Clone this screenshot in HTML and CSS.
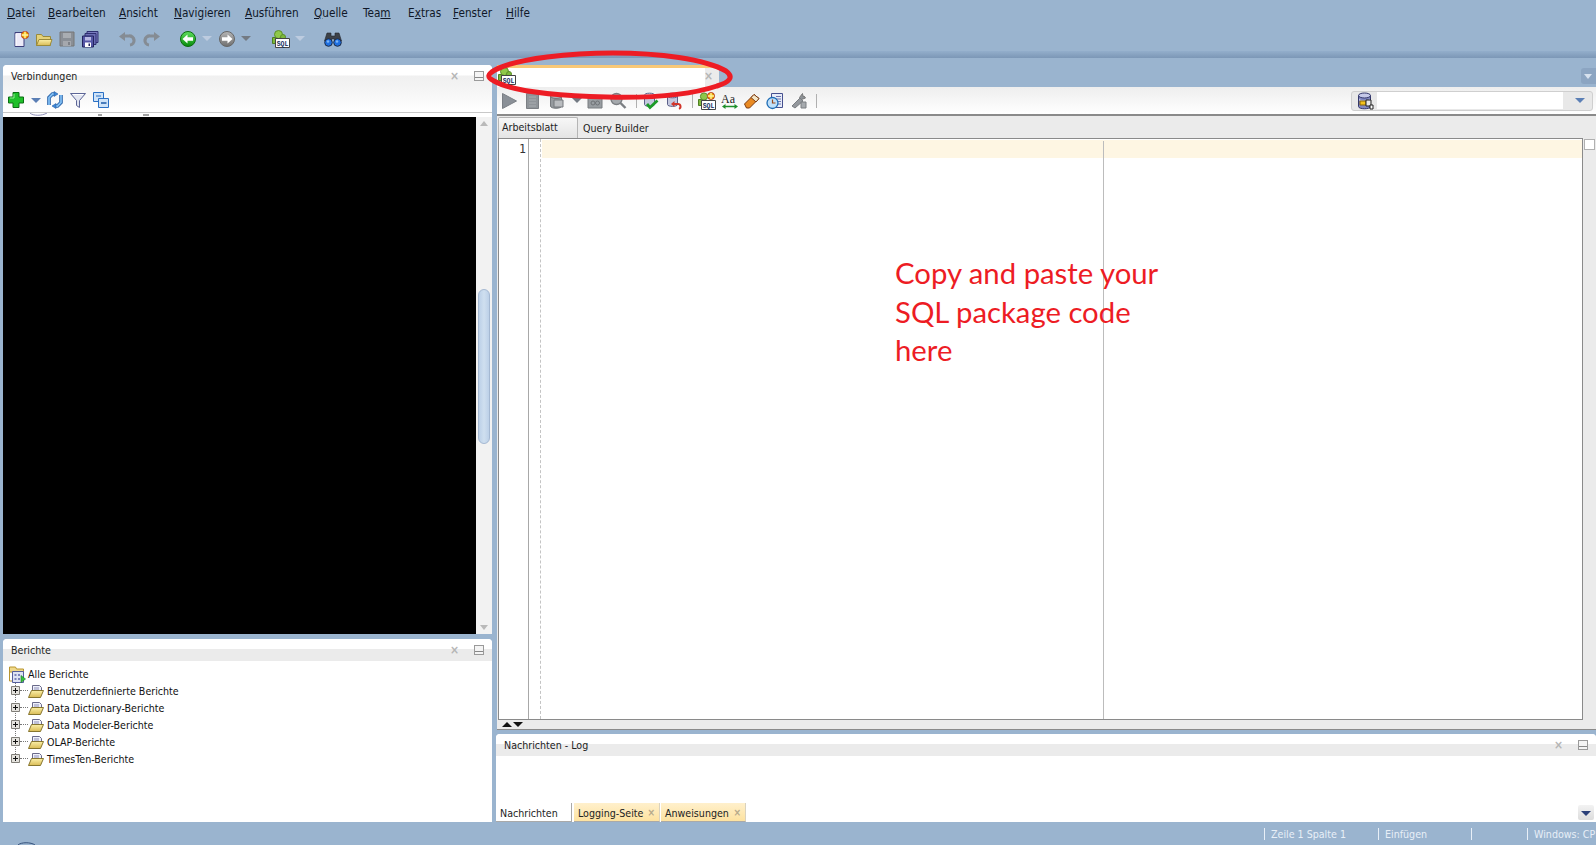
FILE: index.html
```html
<!DOCTYPE html>
<html>
  <head>
    <title>SQL Developer</title>
    <link rel="stylesheet" href="styles.css">
  </head>
  <body>
    <svg class="sprite">
      <defs>
        <linearGradient id="greenBall" x1="0" y1="0" x2="0" y2="1">
          <stop offset="0" stop-color="#5fe05f" />
          <stop offset="1" stop-color="#078a0b" />
        </linearGradient>
        <linearGradient id="greyBall" x1="0" y1="0" x2="0" y2="1">
          <stop offset="0" stop-color="#b5b5b5" />
          <stop offset="1" stop-color="#6f6f6f" />
        </linearGradient>
        <linearGradient id="folderFill" x1="0" y1="0" x2="0" y2="1">
          <stop offset="0" stop-color="#fbf0a8" />
          <stop offset="1" stop-color="#d9bb55" />
        </linearGradient>
      </defs>
      <symbol id="i-new" viewBox="0 0 18 18">
        <path d="M3 2.500h9v14H3z" fill="#eceaf8" stroke="#3d3f7c" />
        <path d="M4 4v12" stroke="#fff" />
        <circle cx="13" cy="5" r="3.600" fill="#f2b705" stroke="#b5301c" />
        <path d="M13 1.500v7M9.500 5h7" stroke="#fff3a0" stroke-width="1.400" />
      </symbol>
      <symbol id="i-open" viewBox="0 0 18 18">
        <path d="M1.500 4.500h5l1.500 2h7.500v9h-14z" fill="#e5d27a" stroke="#9a8a3a" />
        <path d="M1.500 15.500l2.500-6h13l-2 6z" fill="url(#folderFill)" stroke="#9a8a3a" />
      </symbol>
      <symbol id="i-save" viewBox="0 0 18 18">
        <path d="M2 2h14v14H2z" fill="#8a8f96" stroke="#777" />
        <path d="M5 3h8v5H5z" fill="#a9adb2" />
        <path d="M5 11h8v5H5z" fill="#a5a8ad" />
        <path d="M10 12h2v3h-2z" fill="#7e8187" />
      </symbol>
      <symbol id="i-saveall" viewBox="0 0 18 18">
        <path d="M6 1.500h11v11H6z" fill="#7a7cc0" stroke="#2e2f70" />
        <path d="M4 3.500h11v11H4z" fill="#6a6cb4" stroke="#2e2f70" />
        <path d="M1.500 6h11v11h-11z" fill="#5557a6" stroke="#23245e" />
        <path d="M4 7h6v3.500H4z" fill="#b8b9e4" />
        <path d="M4 12.500h6V17H4z" fill="#fff" />
        <path d="M7.500 13.500h1.500v2.500H7.500z" fill="#23245e" />
      </symbol>
      <symbol id="i-undo" viewBox="0 0 18 18">
        <path d="M5 6h6a4.500 4.500 0 0 1 1 9" fill="none" stroke="#858c94" stroke-width="3.200" />
        <path d="M1 6.500l6-4.500v9z" fill="#858c94" />
      </symbol>
      <symbol id="i-redo" viewBox="0 0 18 18">
        <path d="M13 6H7a4.500 4.500 0 0 0-1 9" fill="none" stroke="#858c94" stroke-width="3.200" />
        <path d="M17 6.500l-6-4.500v9z" fill="#858c94" />
      </symbol>
      <symbol id="i-back" viewBox="0 0 18 18">
        <circle cx="9" cy="9" r="7.500" fill="url(#greenBall)" stroke="#0b6b10" />
        <path d="M3.500 9l5-4.500V7.200h5.500v3.600H8.500v2.700z" fill="#fff" />
      </symbol>
      <symbol id="i-forward" viewBox="0 0 18 18">
        <circle cx="9" cy="9" r="7.500" fill="url(#greyBall)" stroke="#666" />
        <path d="M14.500 9l-5-4.500V7.200H4v3.600h5.500v2.700z" fill="#fff" />
      </symbol>
      <symbol id="i-sql" viewBox="0 0 18 18">
        <circle cx="6.500" cy="4.500" r="4" fill="#8fc84a" stroke="#5c8f2a" />
        <circle cx="11" cy="7" r="2.500" fill="#7db83c" stroke="#5c8f2a" />
        <path d="M.5 7.500h3v6h-3z" fill="#7db83c" stroke="#4e7f22" />
        <path d="M3.500 8.500h14v9h-14z" fill="#fff" stroke="#444" />
        <text x="10.500" y="15.600" text-anchor="middle" class="sql-label">SQL</text>
      </symbol>
      <symbol id="i-sqlnew" viewBox="0 0 18 18">
        <circle cx="6" cy="4.500" r="3.600" fill="#8fc84a" stroke="#5c8f2a" />
        <path d="M.5 7.500h3v6h-3z" fill="#7db83c" stroke="#4e7f22" />
        <circle cx="13" cy="4" r="3.500" fill="#f2b705" stroke="#b5301c" />
        <path d="M13 .8v6.400M9.800 4h6.400" stroke="#fff3a0" stroke-width="1.300" />
        <path d="M3.500 8.500h14v9h-14z" fill="#fff" stroke="#444" />
        <text x="10.500" y="15.600" text-anchor="middle" class="sql-label">SQL</text>
      </symbol>
      <symbol id="i-binoculars" viewBox="0 0 18 18">
        <path d="M3 3h4v3h4V3h4l2.500 8h-7V9H7.500v2H.500z" fill="#3d4148" stroke="#23262b" stroke-width=".6" />
        <circle cx="4.500" cy="12.500" r="3.800" fill="#1f6fe0" stroke="#1d2b45" />
        <circle cx="13.500" cy="12.500" r="3.800" fill="#1f6fe0" stroke="#1d2b45" />
        <circle cx="4" cy="11.500" r="1.300" fill="#7db5f5" />
        <circle cx="13" cy="11.500" r="1.300" fill="#7db5f5" />
      </symbol>
      <symbol id="i-plus" viewBox="0 0 18 18">
        <path d="M6 1.500h6v4.500h4.500v6H12v4.500H6V12H1.500V6H6z" fill="#1fc02a" stroke="#0c6d14" />
        <path d="M7 3v4H3" fill="none" stroke="#8bf08f" />
      </symbol>
      <symbol id="i-refresh" viewBox="0 0 18 18">
        <path d="M3 14V6.500L6.500 3H9" fill="none" stroke="#2a62a8" stroke-width="3.600" />
        <path d="M15 4v7.500L11.500 15H9" fill="none" stroke="#2a62a8" stroke-width="3.600" />
        <path d="M3 14V6.500L6.500 3H9" fill="none" stroke="#7fbdf2" stroke-width="1.800" />
        <path d="M15 4v7.500L11.500 15H9" fill="none" stroke="#7fbdf2" stroke-width="1.800" />
        <path d="M8 .5l4 2.500-4 2.500zM10 12.500L6 15l4 2.500z" fill="#3d86d6" stroke="#2a62a8" stroke-width=".6" />
      </symbol>
      <symbol id="i-filter" viewBox="0 0 18 18">
        <path d="M1.500 2.500h15L10.500 9.500v7l-3-2v-5z" fill="#e3e6f1" stroke="#5c6596" />
        <path d="M4 3.500h10" stroke="#fff" />
      </symbol>
      <symbol id="i-collapse" viewBox="0 0 18 18">
        <path d="M1.500 1.500h10v9h-10z" fill="#cfe3f8" stroke="#2b70c4" />
        <path d="M6.500 7.500h10v9h-10z" fill="#cfe3f8" stroke="#2b70c4" />
        <path d="M9 12h5.500" stroke="#1b5aa8" stroke-width="1.400" />
        <path d="M4 5h5" stroke="#2b70c4" />
      </symbol>
      <symbol id="i-run" viewBox="0 0 18 18">
        <path d="M2.500 1.500l14 7.500-14 7.500z" fill="#8a9097" stroke="#7a7f85" />
      </symbol>
      <symbol id="i-script" viewBox="0 0 18 18">
        <path d="M2.500 1.500h12v15h-12z" fill="#8f9499" stroke="#7b7f84" />
        <path d="M5 5h7M5 8h7M5 11h7M5 14h7" stroke="#a9adb1" />
      </symbol>
      <symbol id="i-dbgrey" viewBox="0 0 18 18">
        <path d="M2.500 4v10c0 3 11 3 11 0V4z" fill="#959a9e" stroke="#75797d" />
        <ellipse cx="8" cy="4" rx="5.500" ry="2.500" fill="#b0b4b8" stroke="#75797d" />
        <path d="M6 8h9v7H6z" fill="#b9bcbf" stroke="#75797d" />
      </symbol>
      <symbol id="i-link" viewBox="0 0 18 18">
        <path d="M2 4h5l1 2h8v10H2z" fill="#989da1" stroke="#787c80" />
        <circle cx="7" cy="11" r="2" fill="none" stroke="#6f7377" />
        <circle cx="11.500" cy="11" r="2" fill="none" stroke="#6f7377" />
      </symbol>
      <symbol id="i-find" viewBox="0 0 18 18">
        <circle cx="7.500" cy="7" r="5.500" fill="#a5a9ad" stroke="#7b7f83" stroke-width="1.400" />
        <path d="M11.500 11l5 5" stroke="#7b7f83" stroke-width="2.400" />
      </symbol>
      <symbol id="i-commit" viewBox="0 0 18 18">
        <path d="M2.500 3.500v9c0 2.500 10 2.500 10 0v-9z" fill="#c4c8de" stroke="#5b6089" />
        <ellipse cx="7.500" cy="3.500" rx="5" ry="2.300" fill="#e4e6f2" stroke="#5b6089" />
        <path d="M5 12l3 3.500 7.500-7" fill="none" stroke="#1c9b27" stroke-width="2.800" />
      </symbol>
      <symbol id="i-rollback" viewBox="0 0 18 18">
        <path d="M2.500 3.500v9c0 2.500 10 2.500 10 0v-9z" fill="#c4c8de" stroke="#5b6089" />
        <ellipse cx="7.500" cy="3.500" rx="5" ry="2.300" fill="#e4e6f2" stroke="#5b6089" />
        <path d="M8 12h5a2.500 2.500 0 0 1 1 4.800" fill="none" stroke="#d1352a" stroke-width="2" />
        <path d="M6 12l3.500-3v6z" fill="#d1352a" />
      </symbol>
      <symbol id="i-case" viewBox="0 0 18 18">
        <text x="0" y="10.500" class="case-label">Aa</text>
        <path d="M3 14.500h12" stroke="#1d8f2a" stroke-width="1.500" />
        <path d="M1 14.500l3.500-2.500v5zM17 14.500l-3.500-2.500v5z" fill="#1d8f2a" />
      </symbol>
      <symbol id="i-eraser" viewBox="0 0 18 18">
        <path d="M1.500 12L11 2.500l5 4-9.500 9.500H3.500z" fill="#e98a22" stroke="#7c3a10" />
        <path d="M8 5.500L13 10l3-3.500-5-4z" fill="#f3e6c8" stroke="#7c3a10" />
      </symbol>
      <symbol id="i-history" viewBox="0 0 18 18">
        <path d="M5.500 1.500h11v14h-11z" fill="#e8ecf8" stroke="#46508f" />
        <path d="M10 4.500h5M10 7h5M12 9.500h3M12 12h3" stroke="#6d76b0" />
        <circle cx="6.500" cy="11" r="5.500" fill="#bfe0fa" stroke="#1e6cb5" stroke-width="1.300" />
        <path d="M6.500 7.500V11h3" fill="none" stroke="#9a4a1c" stroke-width="1.200" />
      </symbol>
      <symbol id="i-tools" viewBox="0 0 18 18">
        <path d="M12.500 1.500l-3 4 2 2 4-1.500-1.500-2-1 .5z" fill="#8d9297" stroke="#777" />
        <path d="M2 14l8-8 3 3-8 7z" fill="#94989d" stroke="#7a7e82" />
        <path d="M11 10h5v6h-5z" fill="#a6aaae" stroke="#7a7e82" />
      </symbol>
      <symbol id="i-dbconn" viewBox="0 0 18 18">
        <path d="M1.500 3.500v11c0 3 12 3 12 0v-11z" fill="#8288c0" stroke="#33376b" />
        <ellipse cx="7.500" cy="3.500" rx="6" ry="2.500" fill="#c6c9e8" stroke="#33376b" />
        <path d="M2 7.500c2 2 9 2 11 0" fill="none" stroke="#dfe1f3" />
        <path d="M3 9h6v4H3z" fill="#f3c21c" stroke="#8a6508" />
        <path d="M9 8h5v6H9z" fill="#e8e8e8" stroke="#222" />
        <path d="M13 13h3v4h-3z" fill="#fff" stroke="#222" />
      </symbol>
      <symbol id="i-reports" viewBox="0 0 18 18">
        <path d="M1.500 2h6l1 2h7v3h-14z" fill="#f0d98a" stroke="#b8952f" />
        <path d="M1.500 4v12h3" fill="none" stroke="#b8952f" />
        <path d="M4.500 6.500h11v11h-11z" fill="#dfe3f4" stroke="#565f9c" />
        <path d="M6.500 9h2v2h-2zM10 9h2v2h-2zM6.500 13h2v2h-2zM10 13h2v2h-2z" fill="#7a83bd" />
        <path d="M13 10.500l4.500 3.500-4.500 3.500z" fill="#38c13f" stroke="#1b7d22" stroke-width=".6" />
      </symbol>
      <symbol id="i-folder" viewBox="0 0 16 14">
        <path d="M4.500 1.500h7l2 2V8h-9z" fill="#eef0fa" stroke="#6a6a8a" />
        <path d="M6 4h5M6 6h5" stroke="#8f90b8" />
        <path d="M3.500 6.500h12l-3 7H.5z" fill="url(#folderFill)" stroke="#7c6a20" stroke-width=".9" />
      </symbol>
      <symbol id="i-expand" viewBox="0 0 9 9">
        <path d="M.5.500h8v8h-8z" fill="#e5e3de" stroke="#807e78" />
        <path d="M2 4.500h5M4.500 2v5" stroke="#111" />
      </symbol>
    </svg>

    <div class="app">
      <nav class="menu">
        <span class="menu-item m-datei"><u>D</u>atei</span>
        <span class="menu-item m-bearbeiten"><u>B</u>earbeiten</span>
        <span class="menu-item m-ansicht"><u>A</u>nsicht</span>
        <span class="menu-item m-navigieren"><u>N</u>avigieren</span>
        <span class="menu-item m-ausfuehren"><u>A</u>usführen</span>
        <span class="menu-item m-quelle"><u>Q</u>uelle</span>
        <span class="menu-item m-team">Tea<u>m</u></span>
        <span class="menu-item m-extras">E<u>x</u>tras</span>
        <span class="menu-item m-fenster"><u>F</u>enster</span>
        <span class="menu-item m-hilfe"><u>H</u>ilfe</span>
      </nav>

      <div class="toolbar">
        <span class="tool"><svg class="ic"><use href="#i-new" /></svg></span>
        <span class="tool"><svg class="ic"><use href="#i-open" /></svg></span>
        <span class="tool"><svg class="ic"><use href="#i-save" /></svg></span>
        <span class="tool"><svg class="ic"><use href="#i-saveall" /></svg></span>
        <span class="tool gap-undo"><svg class="ic"><use href="#i-undo" /></svg></span>
        <span class="tool gap-redo"><svg class="ic"><use href="#i-redo" /></svg></span>
        <span class="tool gap-back"><svg class="ic"><use href="#i-back" /></svg></span>
        <span class="drop drop-light"></span>
        <span class="tool"><svg class="ic"><use href="#i-forward" /></svg></span>
        <span class="drop drop-dark"></span>
        <span class="tool gap-sql"><svg class="ic"><use href="#i-sql" /></svg></span>
        <span class="drop drop-light"></span>
        <span class="tool gap-find"><svg class="ic"><use href="#i-binoculars" /></svg></span>
      </div>
      <div class="divider"></div>

      <div class="workspace">
        <div class="left-col">
          <section class="panel panel-conn">
            <header class="panel-head">
              <span class="panel-title">Verbindungen</span>
              <span class="panel-close">×</span>
              <span class="panel-min"></span>
            </header>
            <div class="conn-tools">
              <svg class="ic"><use href="#i-plus" /></svg>
              <span class="drop drop-blue"></span>
              <svg class="ic"><use href="#i-refresh" /></svg>
              <svg class="ic tight"><use href="#i-filter" /></svg>
              <svg class="ic tight"><use href="#i-collapse" /></svg>
            </div>
            <div class="conn-sliver">
              <svg width="160" height="5"><path d="M27 0c3 3 12 3 17 0" fill="none" stroke="#8f90b8" /><path d="M95 2h4M140 2h6" stroke="#444" /></svg>
            </div>
            <div class="conn-body">
              <div class="blackout"></div>
              <div class="scrollbar">
                <span class="arrow-up"></span>
                <span class="thumb"></span>
                <span class="arrow-down"></span>
              </div>
            </div>
          </section>

          <section class="panel panel-reports">
            <header class="panel-head">
              <span class="panel-title">Berichte</span>
              <span class="panel-close">×</span>
              <span class="panel-min"></span>
            </header>
            <div class="tree">
              <div class="tree-root">
                <svg class="ic"><use href="#i-reports" /></svg>
                <span>Alle Berichte</span>
              </div>
              <div class="tree-list">
                <div class="tree-row">
                  <svg class="expander"><use href="#i-expand" /></svg>
                  <span class="tree-dots"></span>
                  <svg class="folder"><use href="#i-folder" /></svg>
                  <span>Benutzerdefinierte Berichte</span>
                </div>
                <div class="tree-row">
                  <svg class="expander"><use href="#i-expand" /></svg>
                  <span class="tree-dots"></span>
                  <svg class="folder"><use href="#i-folder" /></svg>
                  <span>Data Dictionary-Berichte</span>
                </div>
                <div class="tree-row">
                  <svg class="expander"><use href="#i-expand" /></svg>
                  <span class="tree-dots"></span>
                  <svg class="folder"><use href="#i-folder" /></svg>
                  <span>Data Modeler-Berichte</span>
                </div>
                <div class="tree-row">
                  <svg class="expander"><use href="#i-expand" /></svg>
                  <span class="tree-dots"></span>
                  <svg class="folder"><use href="#i-folder" /></svg>
                  <span>OLAP-Berichte</span>
                </div>
                <div class="tree-row">
                  <svg class="expander"><use href="#i-expand" /></svg>
                  <span class="tree-dots"></span>
                  <svg class="folder"><use href="#i-folder" /></svg>
                  <span>TimesTen-Berichte</span>
                </div>
              </div>
            </div>
          </section>
        </div>

        <div class="right-col">
          <div class="doc-tabs">
            <div class="doc-tab">
              <svg class="ic"><use href="#i-sql" /></svg>
              <span class="doc-tab-name"></span>
              <span class="doc-tab-close">×</span>
            </div>
            <span class="tabs-menu"></span>
          </div>

          <div class="editor">
            <div class="editor-tools">
              <span class="etool etool-wide"><svg class="ic"><use href="#i-run" /></svg></span>
              <span class="etool etool-wide"><svg class="ic"><use href="#i-script" /></svg></span>
              <span class="etool etool-wide"><svg class="ic"><use href="#i-dbgrey" /></svg></span>
              <span class="drop drop-dark drop-db"></span>
              <span class="etool"><svg class="ic"><use href="#i-link" /></svg></span>
              <span class="etool"><svg class="ic"><use href="#i-find" /></svg></span>
              <span class="sep"></span>
              <span class="etool"><svg class="ic"><use href="#i-commit" /></svg></span>
              <span class="etool"><svg class="ic"><use href="#i-rollback" /></svg></span>
              <span class="sep"></span>
              <span class="etool"><svg class="ic"><use href="#i-sqlnew" /></svg></span>
              <span class="etool"><svg class="ic"><use href="#i-case" /></svg></span>
              <span class="etool"><svg class="ic"><use href="#i-eraser" /></svg></span>
              <span class="etool"><svg class="ic"><use href="#i-history" /></svg></span>
              <span class="etool etool-tools"><svg class="ic"><use href="#i-tools" /></svg></span>
              <span class="sep"></span>
              <div class="conn-combo">
                <svg class="ic"><use href="#i-dbconn" /></svg>
                <span class="combo-input"></span>
                <span class="drop drop-blue"></span>
              </div>
            </div>

            <div class="sheet-tabs">
              <span class="sheet-tab sheet-active">Arbeitsblatt</span>
              <span class="sheet-tab">Query Builder</span>
            </div>

            <div class="code-row">
              <div class="code-frame">
                <div class="gutter">1</div>
                <div class="fold-col"></div>
                <div class="code">
                  <div class="current-line"></div>
                  <div class="margin-line"></div>
                </div>
              </div>
              <span class="error-box"></span>
            </div>

            <div class="split-strip">
              <span class="split-up"></span>
              <span class="split-down"></span>
            </div>
          </div>

          <section class="panel panel-log">
            <header class="panel-head">
              <span class="panel-title">Nachrichten - Log</span>
              <span class="panel-close">×</span>
              <span class="panel-min"></span>
            </header>
            <div class="log-body"></div>
            <div class="log-tabs">
              <span class="log-tab log-active">Nachrichten</span>
              <span class="log-tab log-yellow log-w1">Logging-Seite<i>×</i></span>
              <span class="log-tab log-yellow log-w2">Anweisungen<i>×</i></span>
              <span class="log-menu"></span>
            </div>
          </section>
        </div>
      </div>

      <footer class="status">
        <svg class="status-arc" width="40" height="23"><path d="M18 23c3-3 13-3 17 0" fill="none" stroke="#33507a" /></svg>
        <span class="st st-a">Zeile 1 Spalte 1</span>
        <span class="st st-b">Einfügen</span>
        <span class="st st-c"></span>
        <span class="st st-d">Windows: CP1252</span>
      </footer>
    </div>

    <!-- annotations pasted over the screenshot -->
    <svg class="red-ring" width="260" height="60">
      <path d="M12 20C34 8 90 3 130 3c46 0 92 6 113 18c8 6 4 11-9 15c-30 10-70 12-110 11C80 46 30 42 11 31C3 27 5 24 12 20z" fill="none" stroke="#ed1c24" stroke-width="5" />
    </svg>
    <div class="red-note">Copy and paste your<br>SQL package code<br>here</div>
  </body>
</html>
```

FILE: styles.css
```css
html,
body {
  margin: 0;
  height: 100%;
  overflow: hidden;
}

body {
  background-color: #9ab4cf;
  font-family: "DejaVu Sans", sans-serif;
  font-stretch: condensed;
  font-size: 10.6px;
  color: #111;
}

.sprite {
  position: absolute;
  width: 0;
  height: 0;
}

.sql-label {
  font-family: "Liberation Mono", monospace;
  font-size: 6.500px;
  font-weight: 700;
  fill: #14305f;
}

.case-label {
  font-family: "Liberation Serif", serif;
  font-size: 12px;
  fill: #222;
}

.ic {
  width: 18px;
  height: 18px;
  flex: none;
}

.app {
  width: 1596px;
  height: 845px;
  display: flex;
  flex-direction: column;
}

/* menu */
.menu {
  height: 26px;
  display: flex;
  align-items: center;
  padding-left: 7px;
  flex: none;
  font-size: 11.7px;
}

.menu-item {
  color: #101828;
}

.m-datei { width: 41px; }
.m-bearbeiten { width: 71px; }
.m-ansicht { width: 55px; }
.m-navigieren { width: 71px; }
.m-ausfuehren { width: 69px; }
.m-quelle { width: 49px; }
.m-team { width: 45px; }
.m-extras { width: 45px; }
.m-fenster { width: 53px; }

/* main toolbar */
.toolbar {
  height: 25px;
  padding-left: 9px;
  display: flex;
  align-items: center;
  flex: none;
}

.tool {
  width: 23px;
  display: flex;
  justify-content: center;
}

.gap-undo { margin-left: 14px; }
.gap-redo { margin-left: 2px; }
.gap-back { margin-left: 13px; }
.gap-sql { margin-left: 15px; }
.gap-find { margin-left: 13px; }

.drop {
  width: 0;
  height: 0;
  margin: 0 3px;
  border-left: 5px solid transparent;
  border-right: 5px solid transparent;
  border-top: 5px solid #bdcce0;
  flex: none;
}

.drop-dark { border-top-color: #737a83; }
.drop-blue { border-top-color: #5b7fb5; }

.divider {
  height: 7px;
  flex: none;
  background: linear-gradient(#93aecb, #7c97b6);
}

.workspace {
  flex: 1;
  display: flex;
  padding: 7px 0 0 3px;
  min-height: 0;
}

/* panels */
.left-col {
  width: 489px;
  display: flex;
  flex-direction: column;
  gap: 5px;
  flex: none;
}

.right-col {
  flex: 1;
  margin-left: 5px;
  display: flex;
  flex-direction: column;
  min-width: 0;
}

.panel {
  display: flex;
  flex-direction: column;
  background-color: #fff;
  border-radius: 4px 4px 0 0;
  overflow: hidden;
}

.panel-head {
  height: 22px;
  flex: none;
  padding: 0 8px;
  display: flex;
  align-items: center;
  background: linear-gradient(#fff 0, #fff 10px, #ebebeb 10px, #ebebeb 22px);
}

.panel-title {
  flex: 1;
  color: #222;
}

.panel-close {
  color: #b5b5b5;
  font-size: 12px;
  width: 8px;
  margin-right: 6px;
  font-weight: 700;
}

.panel-min {
  width: 8px;
  height: 8px;
  border: 1px solid #9a9a9a;
  margin-left: 10px;
  background: linear-gradient(#f4f4f4 0, #f4f4f4 5px, #888 5px, #888 6px, #f4f4f4 6px);
}

.panel-conn {
  height: 569px;
  flex: none;
}

.panel-conn .panel-head {
  height: 23px;
  box-sizing: border-box;
  padding-bottom: 2px;
  background: linear-gradient(#fff 0, #fff 10px, #f0f0f0 11px, #f4f4f4 23px);
}

.conn-tools {
  height: 24px;
  flex: none;
  padding-left: 4px;
  display: flex;
  align-items: center;
  gap: 6px;
  background: linear-gradient(#f4f4f4, #fff);
  border-bottom: 1px solid #c8c8c8;
}

.conn-tools .drop {
  margin: 0 -1px 0 0;
}

.conn-tools .tight {
  margin-left: -1px;
}

.conn-sliver {
  height: 4px;
  flex: none;
  overflow: hidden;
  line-height: 0;
}

.conn-body {
  flex: 1;
  display: flex;
  min-height: 0;
}

.blackout {
  flex: 1;
  background-color: #000;
}

.scrollbar {
  width: 16px;
  flex: none;
  background-color: #f2f2f2;
  display: flex;
  flex-direction: column;
  align-items: center;
  padding: 4px 0;
  box-sizing: border-box;
}

.arrow-up,
.arrow-down {
  width: 0;
  height: 0;
  border-left: 4px solid transparent;
  border-right: 4px solid transparent;
}

.arrow-up { border-bottom: 5px solid #b9b9b9; }
.arrow-down { border-top: 5px solid #b9b9b9; margin-top: auto; }

.thumb {
  width: 10px;
  height: 153px;
  margin-top: 163px;
  border: 1px solid #a4b8d2;
  border-radius: 6px;
  background: linear-gradient(90deg, #bcd0e8, #cfdfef 50%, #bcd0e8);
}

.panel-reports {
  flex: 1;
}

.tree {
  padding-top: 4px;
}

.tree-root {
  height: 17px;
  padding-left: 5px;
  display: flex;
  align-items: center;
  gap: 2px;
}

.tree-list {
  margin-left: 12px;
  height: 76px;
  border-left: 1px dotted #777;
}

.tree-row {
  height: 17px;
  display: flex;
  align-items: center;
}

.expander {
  width: 9px;
  height: 9px;
  margin-left: -5px;
  flex: none;
}

.tree-dots {
  width: 8px;
  border-top: 1px dotted #777;
  flex: none;
}

.folder {
  width: 16px;
  height: 14px;
  margin-right: 3px;
  flex: none;
}

/* document tab */
.doc-tabs {
  height: 22px;
  flex: none;
  display: flex;
  align-items: flex-start;
}

.doc-tab {
  width: 222px;
  height: 22px;
  box-sizing: border-box;
  border-top: 3px solid #f8c877;
  background: linear-gradient(90deg, #fff 208px, #ebebeb 208px);
  display: flex;
  align-items: center;
  padding-left: 1px;
}

.doc-tab .ic {
  margin-top: -3px;
}

.doc-tab-name {
  flex: 1;
}

.doc-tab-close {
  color: #b5b5b5;
  font-size: 12px;
  font-weight: 700;
  margin: -3px 6px 0 0;
}

.tabs-menu {
  width: 15px;
  height: 16px;
  margin: 3px 0 0 auto;
  background-color: #8ca5c2;
  border-radius: 3px 0 0 3px;
  position: relative;
}

.tabs-menu::after {
  content: "";
  position: absolute;
  left: 3px;
  top: 6px;
  border-left: 4.500px solid transparent;
  border-right: 4.500px solid transparent;
  border-top: 5px solid #d7e2ef;
}

/* editor */
.editor {
  height: 643px;
  flex: none;
  display: flex;
  flex-direction: column;
  background-color: #ebebeb;
}

.editor-tools {
  height: 27px;
  flex: none;
  display: flex;
  align-items: center;
  background: linear-gradient(#eeeeee, #fff);
  border-bottom: 2px solid #8a8a8a;
}

.etool {
  width: 22.500px;
  display: flex;
  justify-content: center;
  flex: none;
}

.etool-wide {
  width: 24px;
}

.etool-tools {
  margin: 0 -2px 0 2px;
}

.drop-db {
  margin-right: 2px;
}

.sep {
  width: 1px;
  height: 14px;
  margin: 0 3px 0 7px;
  background-color: #b0b0b0;
  flex: none;
}

.conn-combo {
  width: 242px;
  height: 20px;
  margin: 0 3px 0 auto;
  box-sizing: border-box;
  display: flex;
  align-items: center;
  padding-left: 5px;
  border: 1px solid #cfcfcf;
  border-radius: 3px;
  background-color: #e8e8e8;
}

.combo-input {
  width: 186px;
  height: 17px;
  margin-left: 2px;
  background-color: #fff;
}

.conn-combo .drop {
  margin-left: 12px;
}

.sheet-tabs {
  height: 22px;
  flex: none;
  display: flex;
  align-items: flex-end;
  padding-left: 1px;
}

.sheet-tab {
  height: 20px;
  line-height: 20px;
  padding: 0 4px;
  color: #222;
}

.sheet-active {
  width: 72px;
  padding: 0 3px;
  margin-right: 1px;
  border: 1px solid #b5b5b5;
  border-bottom: 0;
  border-radius: 2px 2px 0 0;
  background: linear-gradient(#f7f7f7, #e4e4e4);
  line-height: 18px;
}

.code-row {
  height: 582px;
  flex: none;
  display: flex;
  align-items: flex-start;
  padding-left: 1px;
}

.code-frame {
  width: 1085px;
  height: 582px;
  flex: none;
  box-sizing: border-box;
  border: 1px solid #8a8a8a;
  background-color: #fff;
  display: flex;
}

.gutter {
  width: 30px;
  flex: none;
  box-sizing: border-box;
  padding: 1px 2px 0 0;
  text-align: right;
  font-family: "DejaVu Sans Mono", monospace;
  font-stretch: normal;
  font-size: 11.500px;
  line-height: 18px;
  color: #333;
  border-right: 1px solid #a8a8a8;
}

.fold-col {
  width: 11px;
  flex: none;
  border-right: 1px dashed #c4c4c4;
}

.code {
  flex: 1;
  position: relative;
  padding: 1px 0 0 1px;
}

.current-line {
  height: 18px;
  background-color: #fef6e3;
}

.margin-line {
  position: absolute;
  left: 562px;
  top: 2px;
  bottom: 0;
  width: 1px;
  background-color: #bcbcbc;
}

.error-box {
  width: 9px;
  height: 9px;
  margin: 1px 0 0 1px;
  border: 1px solid #b0b0b0;
  background-color: #fff;
}

.split-strip {
  height: 8px;
  flex: 1;
  display: flex;
  align-items: center;
  gap: 1px;
  padding-left: 5px;
  border-bottom: 1px solid #8a8a8a;
}

.split-up,
.split-down {
  width: 0;
  height: 0;
  border-left: 5.500px solid transparent;
  border-right: 5.500px solid transparent;
}

.split-up { border-bottom: 5px solid #111; }
.split-down { border-top: 5px solid #111; }

/* log */
.panel-log {
  flex: 1;
  margin-top: 4px;
  margin-left: -1px;
}

.log-body {
  flex: 1;
}

.log-tabs {
  height: 19px;
  flex: none;
  display: flex;
  align-items: stretch;
  gap: 2px;
}

.log-tab {
  box-sizing: border-box;
  line-height: 20px;
  padding-left: 4px;
  border-bottom: 1px solid #a9a9a9;
  color: #222;
  white-space: nowrap;
}

.log-active {
  width: 76px;
  border-right: 1px solid #a9a9a9;
  background-color: #fff;
}

.log-yellow {
  display: flex;
  background: linear-gradient(#fff0cc, #fde2a0);
  border-right: 1px solid #d9d2bf;
}

.log-yellow i {
  color: #b5a88a;
  font-style: normal;
  font-weight: 700;
  font-size: 10px;
  margin: 0 4px 0 auto;
}

.log-w1 { width: 86px; }
.log-w2 { width: 85px; margin-left: -1px; }

.log-menu {
  width: 16px;
  height: 15px;
  margin: 2px 2px 0 auto;
  border-radius: 2px;
  background: linear-gradient(#f3f3f3, #dcdcdc);
  position: relative;
}

.log-menu::after {
  content: "";
  position: absolute;
  left: 3px;
  top: 6px;
  border-left: 5px solid transparent;
  border-right: 5px solid transparent;
  border-top: 5px solid #2a3f78;
}

/* status bar */
.status {
  height: 23px;
  flex: none;
  display: flex;
  align-items: center;
  color: #e8eff7;
  white-space: nowrap;
  overflow: hidden;
}

.status-arc {
  flex: none;
  margin-right: auto;
}

.st {
  box-sizing: border-box;
  height: 12px;
  line-height: 12px;
  padding-left: 6px;
  border-left: 1px solid #e8eff7;
  flex: none;
}

.st-a { width: 114px; }
.st-b { width: 93px; }
.st-c { width: 56px; }
.st-d { width: 69px; overflow: hidden; }

/* annotations */
.red-ring {
  position: absolute;
  left: 483px;
  top: 50px;
  pointer-events: none;
}

.red-note {
  position: absolute;
  left: 895px;
  top: 254px;
  font-family: Lato, sans-serif;
  font-stretch: normal;
  font-size: 29.300px;
  line-height: 38.700px;
  color: #ed1c24;
}
```
